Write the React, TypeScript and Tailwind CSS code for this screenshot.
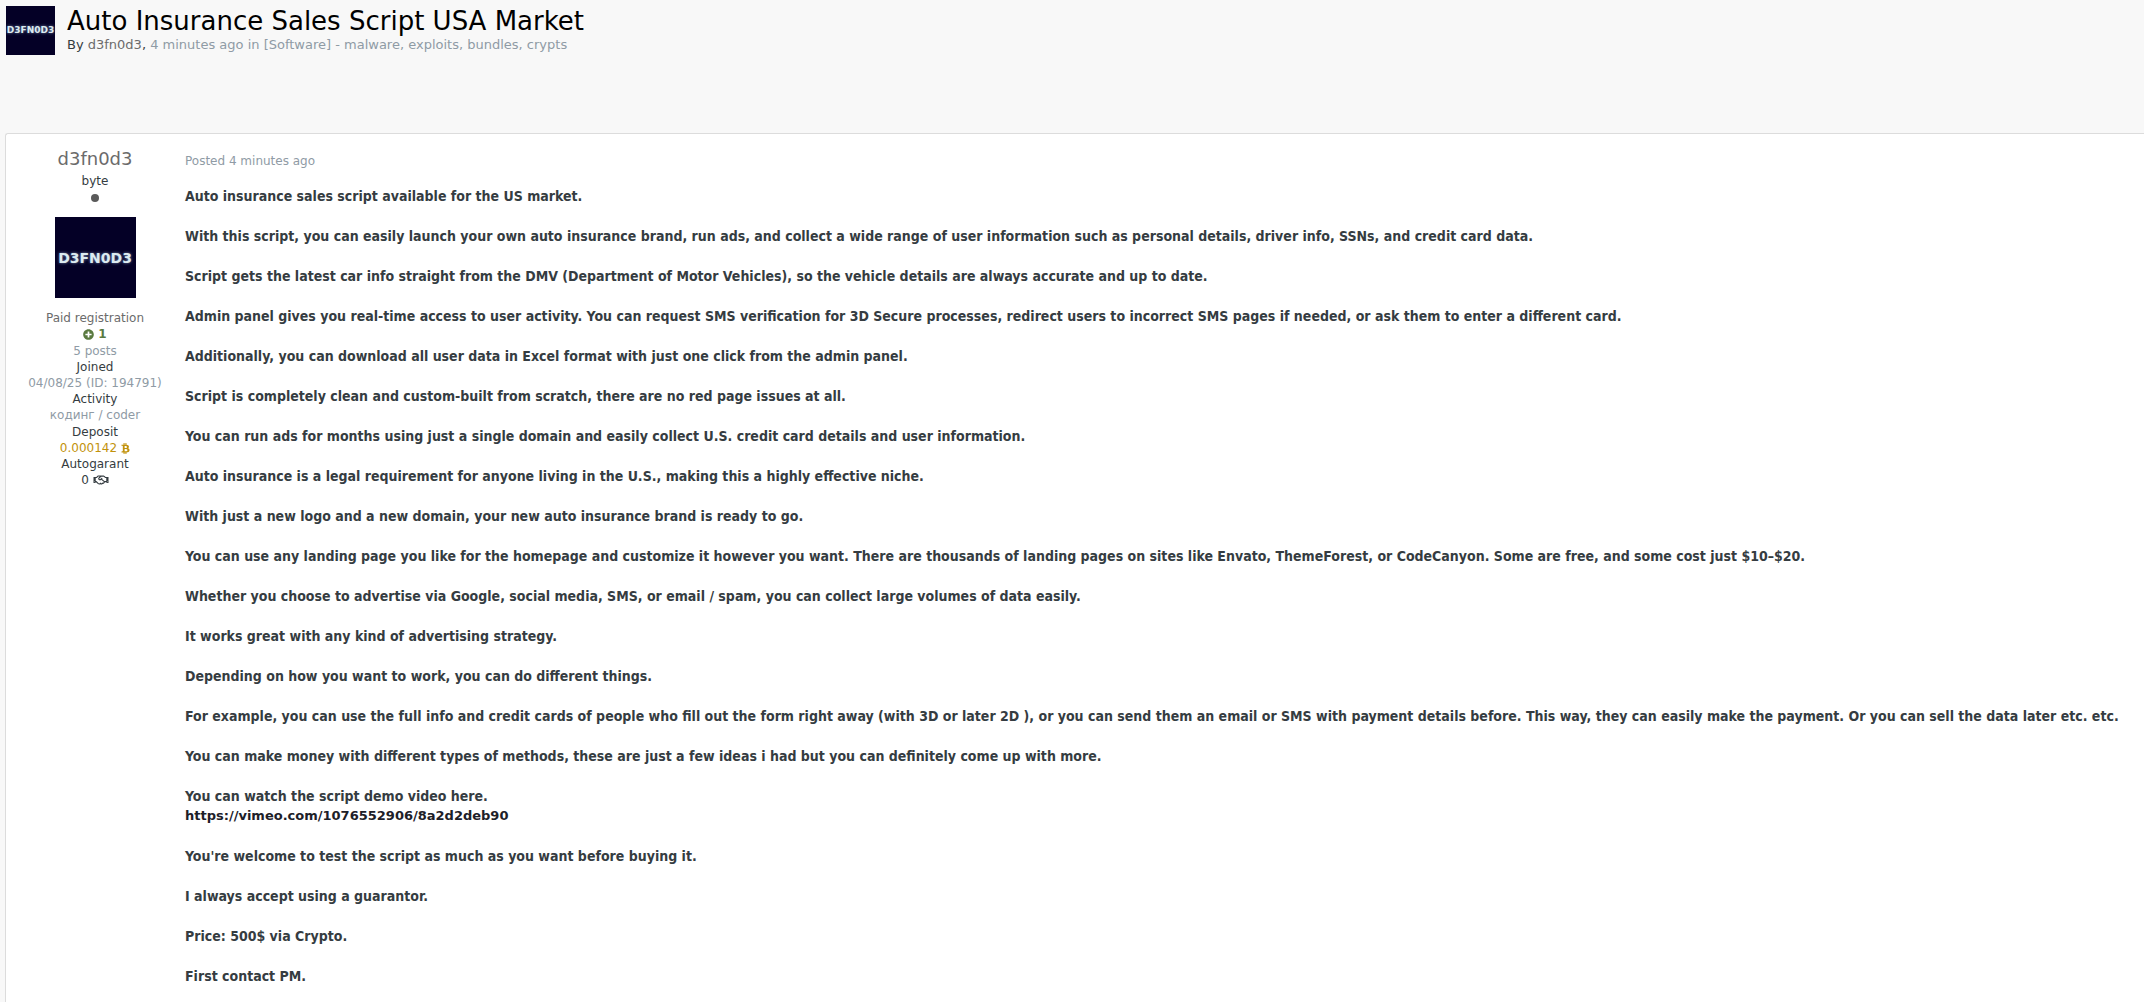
import clsx from 'clsx';
import { FaBtc, FaPlusCircle, FaRegHandshake } from 'react-icons/fa';

const paragraphs = [
  'Auto insurance sales script available for the US market.',
  'With this script, you can easily launch your own auto insurance brand, run ads, and collect a wide range of user information such as personal details, driver info, SSNs, and credit card data.',
  'Script gets the latest car info straight from the DMV (Department of Motor Vehicles), so the vehicle details are always accurate and up to date.',
  'Admin panel gives you real-time access to user activity. You can request SMS verification for 3D Secure processes, redirect users to incorrect SMS pages if needed, or ask them to enter a different card.',
  'Additionally, you can download all user data in Excel format with just one click from the admin panel.',
  'Script is completely clean and custom-built from scratch, there are no red page issues at all.',
  'You can run ads for months using just a single domain and easily collect U.S. credit card details and user information.',
  'Auto insurance is a legal requirement for anyone living in the U.S., making this a highly effective niche.',
  'With just a new logo and a new domain, your new auto insurance brand is ready to go.',
  'You can use any landing page you like for the homepage and customize it however you want. There are thousands of landing pages on sites like Envato, ThemeForest, or CodeCanyon. Some are free, and some cost just $10–$20.',
  'Whether you choose to advertise via Google, social media, SMS, or email / spam, you can collect large volumes of data easily.',
  'It works great with any kind of advertising strategy.',
  'Depending on how you want to work, you can do different things.',
  'For example, you can use the full info and credit cards of people who fill out the form right away (with 3D or later 2D ), or you can send them an email or SMS with payment details before. This way, they can easily make the payment. Or you can sell the data later etc. etc.',
  'You can make money with different types of methods, these are just a few ideas i had but you can definitely come up with more.',
];

const closing = [
  "You're welcome to test the script as much as you want before buying it.",
  'I always accept using a guarantor.',
  'Price: 500$ via Crypto.',
  'First contact PM.',
];

function Avatar({ small }: { small?: boolean }) {
  return (
    <a
      href="#"
      className={clsx(
        'flex shrink-0 items-center justify-center bg-[#040026] font-bold leading-none text-[#dcebf0] [text-shadow:0_0_3px_#7f8fb5]',
        small ? 'size-[49px] text-[9px]' : 'size-[81px] text-[14px]',
      )}
    >
      D3FN0D3
    </a>
  );
}

function AuthorPanel() {
  return (
    <aside className="flex w-[178px] shrink-0 flex-col items-center pt-[13px] text-center text-[12px] leading-4">
      <a href="#" className="text-[18px] leading-6 text-[#6b6b6b]">d3fn0d3</a>
      <p className="leading-5">byte</p>
      <div className="flex h-[14px] items-center">
        <span className="size-2 rounded-full bg-[#5a5a5a]" />
      </div>
      <div className="my-3">
        <Avatar />
      </div>
      <p className="text-[#6b6b6b]">Paid registration</p>
      <p className="flex items-center gap-1 font-bold leading-[17px] text-[#5a7a40]">
        <FaPlusCircle className="size-[11px]" />
        1
      </p>
      <p className="text-[#8f9ba5]">5 posts</p>
      <p>Joined</p>
      <p className="text-[#8f9ba5]">04/08/25 (ID: 194791)</p>
      <p>Activity</p>
      <p className="leading-[17px] text-[#8f9ba5]">кодинг / coder</p>
      <p>Deposit</p>
      <p className="flex items-center gap-1 text-[#c2920c]">
        0.000142
        <FaBtc className="h-[11px] w-[9px]" />
      </p>
      <p>Autogarant</p>
      <p className="flex items-center gap-1">
        0
        <FaRegHandshake className="h-3 w-4" />
      </p>
    </aside>
  );
}

export default function App() {
  return (
    <div className="flex min-h-screen flex-col bg-[#f8f8f8] pl-[5px] font-['DejaVu_Sans',sans-serif] text-[#353c41]">
      <header className="mb-[78px] flex gap-3 pl-px pt-[6px]">
        <Avatar small />
        <div>
          <h1 className="text-[26px] leading-[30px] text-black">Auto Insurance Sales Script USA Market</h1>
          <p className="text-[13px] leading-[18px] text-[#8f9ba5]">
            <span className="text-[#353c41]">
              By <a href="#" className="text-[#6b6b6b]">d3fn0d3</a>,
            </span>{' '}
            4 minutes ago in <a href="#">[Software] - malware, exploits, bundles, crypts</a>
          </p>
        </div>
      </header>

      <article className="flex flex-1 gap-px rounded-tl-[3px] border-l border-t border-[#dcdcdc] bg-white">
        <AuthorPanel />
        <div className="min-w-0 flex-1 pt-[17px]">
          <a href="#" className="block text-[12px] leading-5 text-[#8f9ba5]">Posted 4 minutes ago</a>
          <div className="mt-[15px] space-y-5 font-['DejaVu_Sans_Condensed','DejaVu_Sans',sans-serif] text-[14px] font-bold leading-5">
            {paragraphs.map((p) => <p key={p}>{p}</p>)}
            <div>
              <p>You can watch the script demo video here.</p>
              <a href="#" className="block font-['DejaVu_Sans',sans-serif] text-[13px] leading-5 text-[#1d2028]">
                https://vimeo.com/1076552906/8a2d2deb90
              </a>
            </div>
            {closing.map((p) => <p key={p}>{p}</p>)}
          </div>
        </div>
      </article>
    </div>
  );
}
